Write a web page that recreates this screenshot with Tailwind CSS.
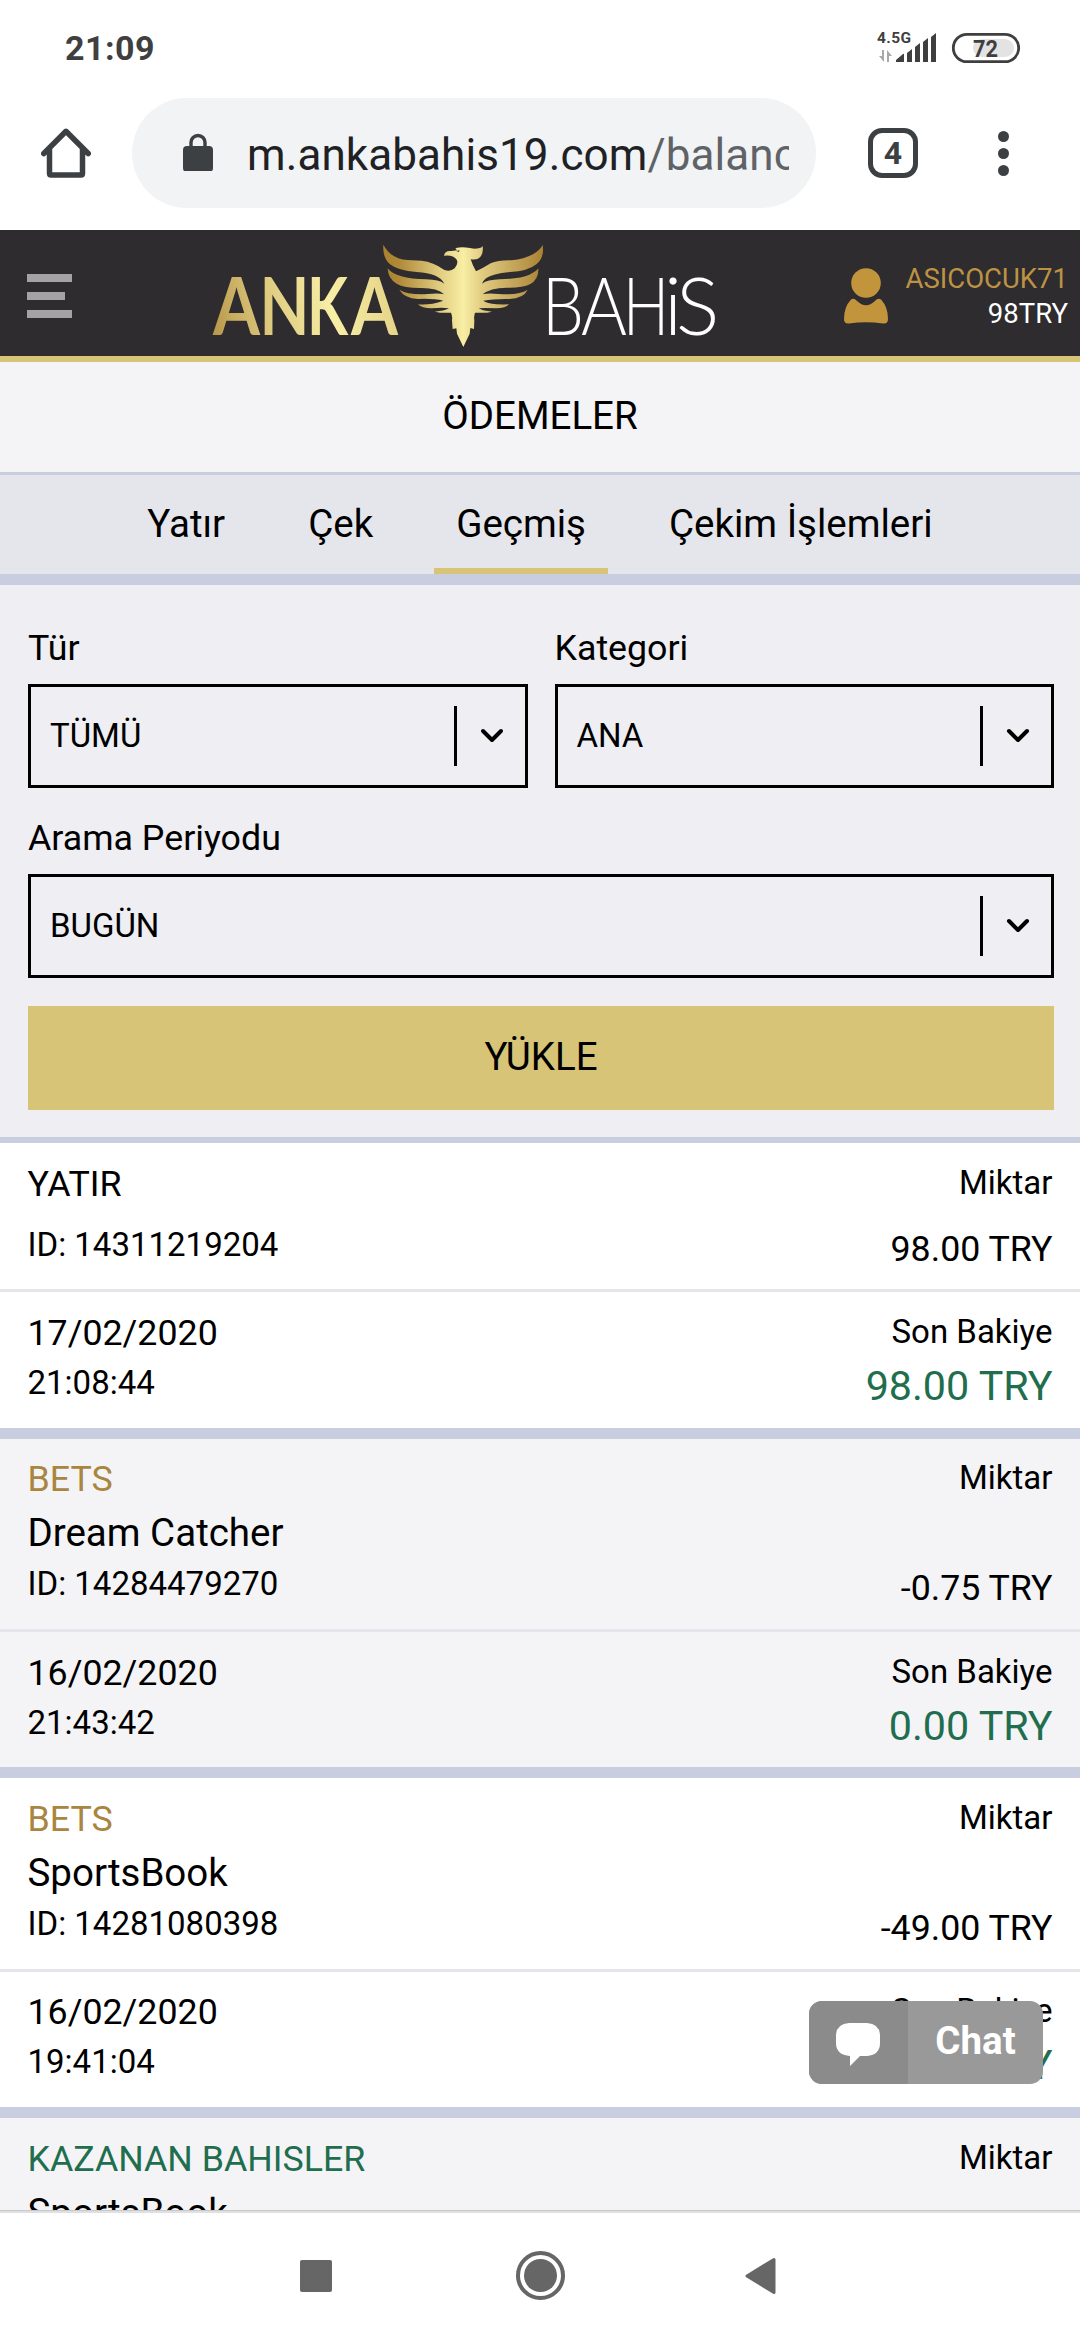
<!DOCTYPE html>
<html lang="tr">
<head>
  <meta charset="UTF-8" />
  <meta name="viewport" content="width=device-width, initial-scale=1" />
  <title>Ödemeler - AnkaBahis</title>
  <script src="https://cdn.jsdelivr.net/npm/@tailwindcss/browser@4"></script>
</head>
<body class="bg-white text-black font-[Roboto,sans-serif] w-[1080px] h-[2340px] overflow-hidden flex flex-col">

  <!-- Status bar -->
  <div class="h-[66px] shrink-0 flex items-end justify-between pl-[65px] pr-[60px] text-[#3f3f3f]">
    <span class="text-[34px] leading-[36px] font-bold tracking-[0.5px]">21:09</span>
    <svg class="w-[144px] h-[36px]" viewBox="876 30 144 36" fill="#3f3f3f">
      <text x="877" y="43" font-size="15.5" font-weight="700" textLength="34">4.5G</text>
      <path d="M882 50h2v12l-5-6h3zM887 50l5 6h-3v6h-2z" fill="#a8a8a8" />
      <path d="M896 60l7-6q1-.5 1 .5V62h-8zM907 53l5-4v13h-5zM915 47l5-4v19h-5zM923 42l5-4v24h-5zM931 37l5-4v29h-5z" />
      <rect x="973" y="39" width="41" height="18" rx="9" fill="#e3e3e3" />
      <rect x="953.3" y="34.3" width="65.400" height="27.400" rx="13.7" fill="none" stroke="#3f3f3f" stroke-width="2.800" />
      <text x="973" y="57" font-size="24" font-weight="700" textLength="25" lengthAdjust="spacingAndGlyphs">72</text>
    </svg>
  </div>

  <!-- Browser toolbar -->
  <div class="h-[164px] shrink-0 flex items-center pt-[10px] pl-[41px] text-[#3c4043]">
    <svg class="w-[50px] h-[50px] shrink-0" viewBox="0 0 50 50" fill="none" stroke="#3c4043" stroke-width="5.500" stroke-linejoin="round" stroke-linecap="round">
      <path d="M2.800 25.500L25 3.300L47.200 25.500M8.500 21V45.500Q8.500 47 10 47H40Q41.500 47 41.500 45.500V21" />
    </svg>
    <div class="ml-[41px] w-[684px] h-[110px] shrink-0 rounded-full bg-[#f1f3f4] flex items-center pl-[51px] pr-[27px]">
      <svg class="w-[30px] h-[38px] shrink-0 -mt-[3px]" viewBox="0 0 30 38">
        <path d="M8 14V9.500a7 7 0 0 1 14 0V14" fill="none" stroke="#3c4043" stroke-width="3.400" />
        <rect y="13" width="30" height="26" rx="4" fill="#3c4043" />
      </svg>
      <div class="ml-[34px] flex-1 overflow-hidden whitespace-nowrap text-[44px] leading-[56px] tracking-[0.1px] mt-[3px] text-[#202124]">m.ankabahis19.com<span class="text-[#5f6368]">/balance</span></div>
    </div>
    <div class="ml-[52px] w-[50px] h-[50px] shrink-0 rounded-[14px] border-[5.500px] border-[#3c4043] flex items-center justify-center text-[32px] leading-none font-bold">4</div>
    <div class="ml-[79.500px] flex flex-col gap-[6px]">
      <span class="w-[11px] h-[11px] rounded-full bg-[#3c4043]"></span>
      <span class="w-[11px] h-[11px] rounded-full bg-[#3c4043]"></span>
      <span class="w-[11px] h-[11px] rounded-full bg-[#3c4043]"></span>
    </div>
  </div>

  <!-- Site header -->
  <header class="h-[132px] shrink-0 bg-[#2e2c2f] border-b-[6px] border-[#d7c477] flex items-center">
    <div class="ml-[27px] w-[45px] flex flex-col gap-[9.500px] mt-[6px]">
      <span class="h-[8.500px] bg-[#a3a3a3]"></span>
      <span class="h-[8.500px] w-[38px] bg-[#a3a3a3]"></span>
      <span class="h-[8.500px] bg-[#a3a3a3]"></span>
    </div>
    <svg class="ml-[138px] w-[510px] h-[126px] shrink-0" viewBox="210 230 510 126">
      <defs>
        <linearGradient id="gold" gradientUnits="userSpaceOnUse" x1="213" y1="335" x2="397" y2="300">
          <stop offset="0" stop-color="#b8974a" />
          <stop offset=".3" stop-color="#dcc87d" />
          <stop offset=".65" stop-color="#f8eea6" />
          <stop offset="1" stop-color="#e4d387" />
        </linearGradient>
        <linearGradient id="wing" gradientUnits="userSpaceOnUse" x1="40" y1="0" x2="520" y2="0">
          <stop offset="0" stop-color="#a9812f" />
          <stop offset=".1" stop-color="#b08a38" />
          <stop offset=".35" stop-color="#e0cc80" />
          <stop offset=".5" stop-color="#f8eea4" />
          <stop offset=".62" stop-color="#e0cb80" />
          <stop offset=".9" stop-color="#b8964a" />
          <stop offset="1" stop-color="#a9812f" />
        </linearGradient>
      </defs>
      <text y="335" font-family="Lato" font-size="81" font-weight="700" fill="url(#gold)"><tspan x="213" textLength="47" lengthAdjust="spacingAndGlyphs">A</tspan><tspan x="259.500" textLength="50" lengthAdjust="spacingAndGlyphs">N</tspan><tspan x="307" textLength="41" lengthAdjust="spacingAndGlyphs">K</tspan><tspan x="351" textLength="47" lengthAdjust="spacingAndGlyphs">A</tspan></text>
      <g transform="translate(370 225) scale(.33333)" fill="url(#wing)">
        <path d="M222 92Q224 76 244 78L262 76Q254 71 258 69Q275 65 300 69Q314 73 326 70Q336 68 338 63Q341 84 330 97Q322 106 302 103Q308 122 318 139Q340 129 362 115Q385 105 425 106Q466 103 496 83Q514 70 518 59Q524 97 500 117Q475 138 420 141Q366 146 348 160Q339 168 336 176Q352 164 390 163Q450 161 478 149Q498 140 505 130Q507 164 480 178Q458 189 410 188Q360 189 338 208Q354 203 386 207Q446 211 473 194Q461 220 418 222Q372 221 340 227Q350 235 380 238Q403 239 417 238Q407 250 378 250Q342 248 326 250Q340 258 366 260Q348 265 315 263Q311 275 313 286L312 312L301 309L299 326L280 366L261 326L259 310L248 312L246 286Q248 274 243 263Q216 265 194 260Q222 258 237 250Q218 246 184 250Q155 250 144 238Q181 241 220 227Q190 220 144 222Q103 220 88 194Q116 211 174 207Q206 203 222 208Q202 188 150 189Q102 189 80 176Q54 162 53 130Q78 162 168 163Q208 164 223 176Q208 145 140 141Q83 137 60 118Q37 98 40 59Q63 102 112 105L155 107Q190 111 222 134Q240 142 254 130Q267 113 259 103Q250 89 222 92Z" />
        <path d="M259 78l10-2-3 5z" fill="#2e2c2f" />
      </g>
      <text y="335" font-family="Lato" font-size="81" font-weight="300" fill="#fff"><tspan x="542" textLength="42" lengthAdjust="spacingAndGlyphs">B</tspan><tspan x="581" textLength="46" lengthAdjust="spacingAndGlyphs">A</tspan><tspan x="623" textLength="46" lengthAdjust="spacingAndGlyphs">H</tspan><tspan x="664">i</tspan><tspan x="676">S</tspan></text>
    </svg>
    <svg class="ml-[124px] w-[44px] h-[56px] shrink-0 mt-[5px]" viewBox="0 0 44 56" fill="#c2953c">
      <circle cx="22" cy="15" r="14.800" />
      <path d="M7 31.500Q10 29.500 13 33Q22 41.500 31 33Q34 29.500 37 31.500Q44 39 44 51Q44 56 39 55.500Q22 53 5 55.500Q0 56 0 51Q0 39 7 31.500Z" />
    </svg>
    <div class="ml-auto pr-[12px] text-right text-[27.500px] leading-[35px] mt-[5px]">
      <div class="text-[#bd9243]">ASICOCUK71</div>
      <div class="text-white">98TRY</div>
    </div>
  </header>

  <h1 class="h-[110px] shrink-0 bg-[#f4f4f7] text-center text-[38.500px] leading-[108px]">ÖDEMELER</h1>

  <!-- Tabs -->
  <nav class="h-[113px] shrink-0 bg-[#e5e6eb] border-t-[3px] border-b-[11px] border-[#c9cde0] flex justify-center gap-[39px] text-[38.500px] leading-[97px]">
    <a class="px-[22px]">Yatır</a>
    <a class="px-[22px]">Çek</a>
    <a class="px-[22px] border-b-[6px] border-[#d7c477]">Geçmiş</a>
    <a class="px-[22px]">Çekim İşlemleri</a>
  </nav>

  <!-- Filters -->
  <form class="h-[558px] shrink-0 bg-[#eeeef3] border-b-[6px] border-[#c9cde0] pl-[28px] pr-[26px] pt-[38px]">
    <div class="flex gap-[27px]">
      <div class="flex-1">
        <label class="block h-[61px] text-[35.750px] leading-[50px]">Tür</label>
        <div class="h-[104px] border-[3px] border-black flex items-center pl-[19px] pr-[21px] text-[33px]">
          <span class="flex-1">TÜMÜ</span>
          <span class="w-[3px] h-[60px] bg-black"></span>
          <svg class="ml-[23px] w-[24px] h-[16px]" viewBox="0 0 24 16" fill="none" stroke="#000" stroke-width="4" stroke-linecap="round" stroke-linejoin="round"><path d="M3 3l9 9 9-9" /></svg>
        </div>
      </div>
      <div class="flex-1">
        <label class="block h-[61px] text-[35.750px] leading-[50px]">Kategori</label>
        <div class="h-[104px] border-[3px] border-black flex items-center pl-[19px] pr-[21px] text-[33px]">
          <span class="flex-1">ANA</span>
          <span class="w-[3px] h-[60px] bg-black"></span>
          <svg class="ml-[23px] w-[24px] h-[16px]" viewBox="0 0 24 16" fill="none" stroke="#000" stroke-width="4" stroke-linecap="round" stroke-linejoin="round"><path d="M3 3l9 9 9-9" /></svg>
        </div>
      </div>
    </div>
    <label class="block mt-[25px] h-[61px] text-[35.750px] leading-[50px]">Arama Periyodu</label>
    <div class="h-[104px] border-[3px] border-black flex items-center pl-[19px] pr-[21px] text-[33px]">
      <span class="flex-1">BUGÜN</span>
      <span class="w-[3px] h-[60px] bg-black"></span>
      <svg class="ml-[23px] w-[24px] h-[16px]" viewBox="0 0 24 16" fill="none" stroke="#000" stroke-width="4" stroke-linecap="round" stroke-linejoin="round"><path d="M3 3l9 9 9-9" /></svg>
    </div>
    <button type="button" class="block mt-[28px] w-full h-[104px] bg-[#d7c477] text-[38.500px] leading-[100px] pb-[2px]">YÜKLE</button>
  </form>

  <!-- Transactions -->
  <main class="h-[1067px] shrink-0 overflow-hidden text-[33px]">
    <section class="bg-white border-b-[11px] border-[#c9cde0]">
      <div class="h-[149px] border-b-[3px] border-[#e5e6ec] px-[27.500px] flex justify-between">
        <div class="pt-[20px] pb-[26px] flex flex-col justify-between">
          <div class="text-[35.750px] leading-[42px]">YATIR</div>
          <div class="leading-[36px]">ID: 14311219204</div>
        </div>
        <div class="pt-[19px] pb-[19px] flex flex-col justify-between text-right">
          <div class="leading-[42px]">Miktar</div>
          <div class="text-[35.750px] leading-[42px]">98.00 TRY</div>
        </div>
      </div>
      <div class="h-[136px] px-[27.500px] flex justify-between">
        <div class="pt-[20px]">
          <div class="text-[35.750px] leading-[42px]">17/02/2020</div>
          <div class="leading-[58px]">21:08:44</div>
        </div>
        <div class="pt-[19px] text-right">
          <div class="leading-[42px]">Son Bakiye</div>
          <div class="text-[41.250px] leading-[66px] text-[#216e4e]">98.00 TRY</div>
        </div>
      </div>
    </section>

    <section class="bg-[#f4f4f7] border-b-[11px] border-[#c9cde0]">
      <div class="h-[193px] border-b-[3px] border-[#e5e6ec] px-[27.500px] flex justify-between">
        <div class="pt-[19px]">
          <div class="text-[35.750px] leading-[42px] text-[#a98640]">BETS</div>
          <div class="text-[38.500px] leading-[66px]">Dream Catcher</div>
          <div class="leading-[36px]">ID: 14284479270</div>
        </div>
        <div class="pt-[18px] pb-[20px] flex flex-col justify-between text-right">
          <div class="leading-[42px]">Miktar</div>
          <div class="text-[35.750px] leading-[42px]">-0.75 TRY</div>
        </div>
      </div>
      <div class="h-[135px] px-[27.500px] flex justify-between">
        <div class="pt-[20px]">
          <div class="text-[35.750px] leading-[42px]">16/02/2020</div>
          <div class="leading-[58px]">21:43:42</div>
        </div>
        <div class="pt-[19px] text-right">
          <div class="leading-[42px]">Son Bakiye</div>
          <div class="text-[41.250px] leading-[66px] text-[#216e4e]">0.00 TRY</div>
        </div>
      </div>
    </section>

    <section class="bg-white border-b-[11px] border-[#c9cde0]">
      <div class="h-[194px] border-b-[3px] border-[#e5e6ec] px-[27.500px] flex justify-between">
        <div class="pt-[20px]">
          <div class="text-[35.750px] leading-[42px] text-[#a98640]">BETS</div>
          <div class="text-[38.500px] leading-[66px]">SportsBook</div>
          <div class="leading-[36px]">ID: 14281080398</div>
        </div>
        <div class="pt-[19px] pb-[20px] flex flex-col justify-between text-right">
          <div class="leading-[42px]">Miktar</div>
          <div class="text-[35.750px] leading-[42px]">-49.00 TRY</div>
        </div>
      </div>
      <div class="h-[135px] px-[27.500px] flex justify-between">
        <div class="pt-[19px]">
          <div class="text-[35.750px] leading-[42px]">16/02/2020</div>
          <div class="leading-[58px]">19:41:04</div>
        </div>
        <div class="pt-[18px] text-right">
          <div class="leading-[42px]">Son Bakiye</div>
          <div class="text-[41.250px] leading-[66px] text-[#216e4e]">0.75 TRY</div>
        </div>
      </div>
    </section>

    <section class="bg-[#f4f4f7]">
      <div class="h-[190px] px-[27.500px] flex justify-between">
        <div class="pt-[20px]">
          <div class="text-[35.750px] leading-[42px] text-[#216e4e]">KAZANAN BAHISLER</div>
          <div class="text-[38.500px] leading-[66px]">SportsBook</div>
        </div>
        <div class="pt-[19px] leading-[42px]">Miktar</div>
      </div>
    </section>
  </main>

  <!-- Android navigation -->
  <div class="h-[130px] shrink-0 bg-white border-t border-[#c8c9cc]">
    <div class="h-[2px] bg-[#e0e0e0]"></div>
    <div class="pl-[300px] h-[125px] flex items-center">
      <span class="w-[32px] h-[32px] rounded-[2px] bg-[#666]"></span>
      <svg class="ml-[183px] w-[51px] h-[51px]" viewBox="0 0 51 51">
        <circle cx="25.500" cy="25.500" r="22.500" fill="none" stroke="#666" stroke-width="4" />
        <circle cx="25.500" cy="25.500" r="16.500" fill="#666" />
      </svg>
      <svg class="ml-[179px] w-[31px] h-[38px]" viewBox="0 0 31 38">
        <path d="M2 19L29 2.500V35.500Z" fill="#666" stroke="#666" stroke-width="3" stroke-linejoin="round" />
      </svg>
    </div>
  </div>

  <!-- Floating chat button -->
  <div class="absolute left-[809px] top-[2001px] w-[234px] h-[83px] rounded-[13px] overflow-hidden bg-[#999] flex">
    <div class="w-[99px] bg-[#8b8b8b] pl-[27px] pt-[22px]">
      <svg class="w-[44px] h-[43px]" viewBox="0 0 44 43" fill="#fff"><path d="M13 0H31Q44 1 44 13V20Q44 32 31 33H24L14 43V33Q0 32 0 20V13Q0 1 13 0Z" /></svg>
    </div>
    <span class="flex-1 text-center text-white font-bold text-[38.500px] leading-[80px]">Chat</span>
  </div>

</body>
</html>
